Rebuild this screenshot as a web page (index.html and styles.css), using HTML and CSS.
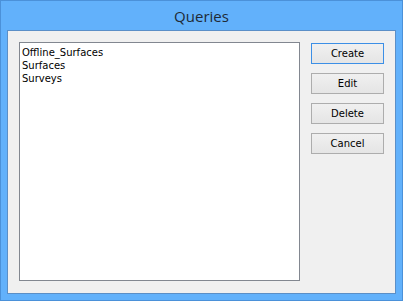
FILE: index.html
```html
<!DOCTYPE html>
<html>
<head>
<meta charset="utf-8">
<link rel="stylesheet" href="styles.css">
</head>
<body>
<div class="window">
  <div class="titlebar">Queries</div>
  <div class="client">
    <div class="listbox">
      <div class="item">Offline_Surfaces</div>
      <div class="item">Surfaces</div>
      <div class="item">Surveys</div>
    </div>
    <div class="buttons">
      <button class="btn default">Create</button>
      <button class="btn">Edit</button>
      <button class="btn">Delete</button>
      <button class="btn">Cancel</button>
    </div>
  </div>
</div>
</body>
</html>
```
FILE: styles.css
```css
html, body {
  margin: 0;
  padding: 0;
}
body {
  width: 403px;
  height: 301px;
  overflow: hidden;
}
.window {
  box-sizing: border-box;
  width: 403px;
  height: 301px;
  border: 1px solid #4b91d9;
  background: #62b1fb;
  padding: 0 6px 6px 6px;
  display: flex;
  flex-direction: column;
}
.titlebar {
  height: 29px;
  line-height: 31px;
  text-align: center;
  font-family: "Open Sans", "DejaVu Sans", sans-serif;
  font-size: 15px;
  color: #202a36;
}
.client {
  flex: 1;
  border: 1px solid #5b8fc7;
  background: #f0f0f0;
  padding: 11px 11px 12px 11px;
  display: flex;
  gap: 11px;
}
.listbox {
  box-sizing: border-box;
  width: 281px;
  border: 1px solid #828790;
  background: #ffffff;
  padding: 3px 2px;
  font-family: "DejaVu Sans", sans-serif;
  font-size: 10px;
  color: #000;
}
.item {
  height: 13px;
  line-height: 13px;
}
.buttons {
  display: flex;
  flex-direction: column;
  gap: 9px;
  padding-top: 1px;
}
.btn {
  box-sizing: border-box;
  width: 73px;
  height: 21px;
  margin: 0;
  padding: 0;
  border: 1px solid #adadad;
  background: linear-gradient(#f0f0f0, #e5e5e5);
  font-family: "DejaVu Sans", sans-serif;
  font-size: 10px;
  color: #000;
}
.btn.default {
  border-color: #3c8fe6;
}
```
